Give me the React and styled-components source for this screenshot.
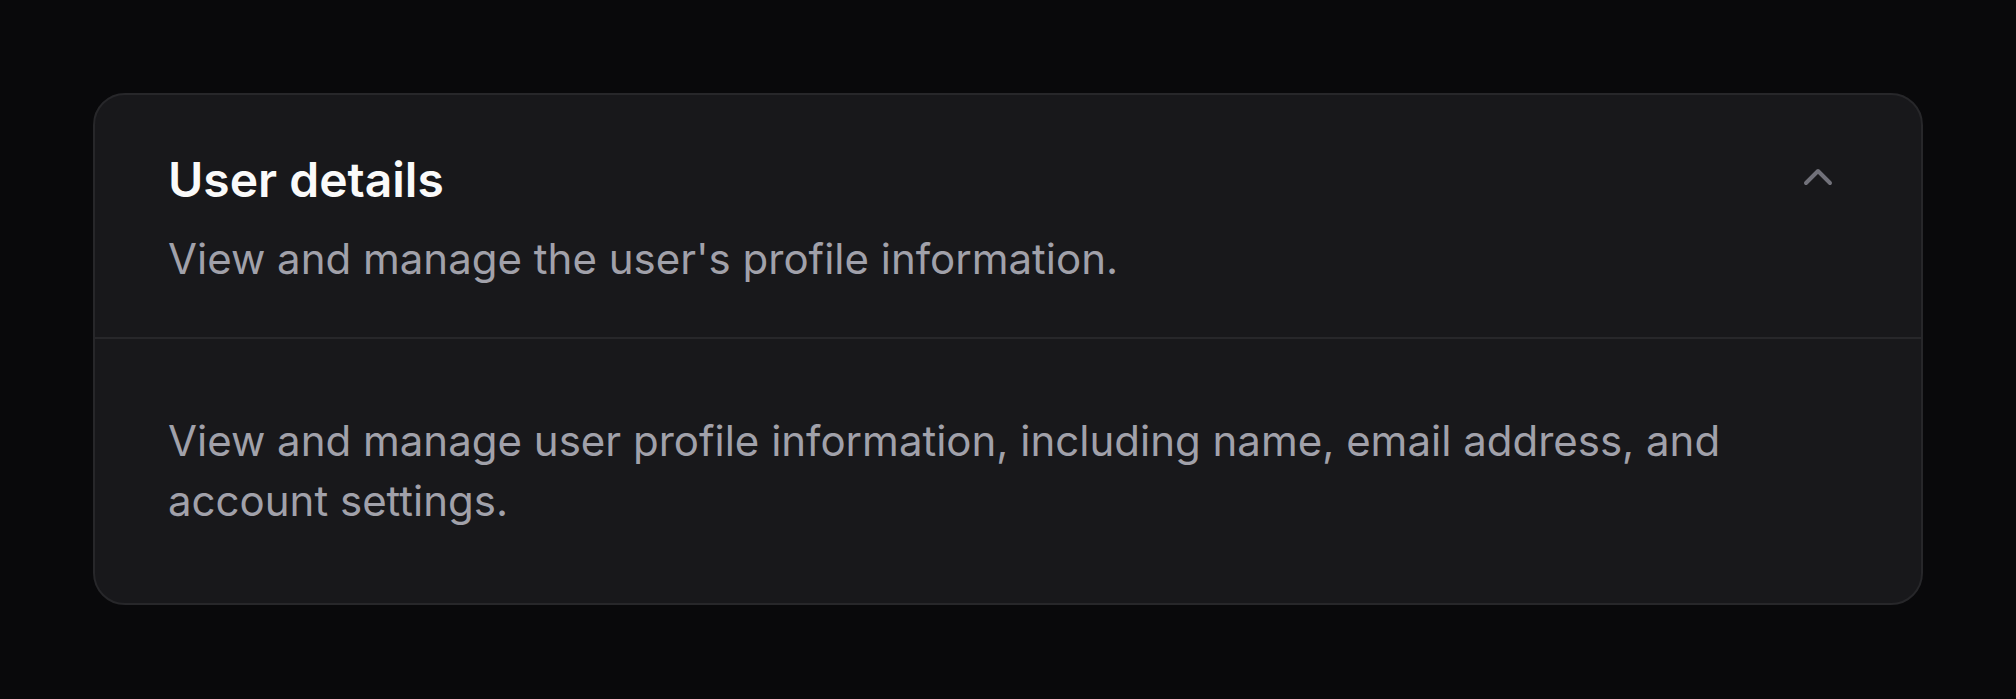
import React, { useState } from "react";
import styled, { createGlobalStyle } from "styled-components";

const GlobalStyle = createGlobalStyle`
  html, body {
    margin: 0;
    padding: 0;
    background: #09090b;
    font-family: Inter, "Noto Sans", sans-serif;
  }
`;

const Page = styled.main`
  min-height: 699px;
  box-sizing: border-box;
  padding: 93px 93px;
  background: #09090b;
`;

const Card = styled.section`
  background: #18181b;
  border: 2px solid #27272a;
  border-radius: 32px;
  overflow: hidden;
`;

const Header = styled.header`
  display: flex;
  align-items: flex-start;
  justify-content: space-between;
  padding: 56px 79px 48px 73px;
  border-bottom: ${({ open }) => (open ? "2px solid #27272a" : "none")};
`;

const HeadText = styled.div`
  display: flex;
  flex-direction: column;
  gap: 20px;
`;

const Title = styled.h2`
  margin: 0;
  font-size: 48px;
  line-height: 57.6px;
  font-weight: 600;
  color: #fafafa;
`;

const Description = styled.p`
  margin: 0;
  font-size: 42px;
  line-height: 60px;
  color: #a1a1aa;
`;

const Toggle = styled.button`
  display: flex;
  padding: 0;
  margin-top: 2px;
  border: none;
  background: none;
  color: #71717a;
  cursor: pointer;
`;

const Body = styled.div`
  padding: 72px 75px 72px 73px;
`;

const BodyText = styled.p`
  margin: 0;
  font-size: 42px;
  line-height: 60px;
  color: #a1a1aa;
`;

const Chevron = ({ open }) => (
  <svg
    width="48"
    height="48"
    viewBox="0 0 24 24"
    fill="none"
    stroke="currentColor"
    strokeWidth="2"
    strokeLinecap="round"
    strokeLinejoin="round"
  >
    <path d={open ? "m18 15-6-6-6 6" : "m6 9 6 6 6-6"} />
  </svg>
);

export default function App() {
  const [open, setOpen] = useState(true);
  return (
    <Page>
      <GlobalStyle />
      <Card>
        <Header open={open}>
          <HeadText>
            <Title>User details</Title>
            <Description>View and manage the user's profile information.</Description>
          </HeadText>
          <Toggle aria-label="Toggle details" onClick={() => setOpen(!open)}>
            <Chevron open={open} />
          </Toggle>
        </Header>
        {open && (
          <Body>
            <BodyText>
              View and manage user profile information, including name, email
              address, and account settings.
            </BodyText>
          </Body>
        )}
      </Card>
    </Page>
  );
}
